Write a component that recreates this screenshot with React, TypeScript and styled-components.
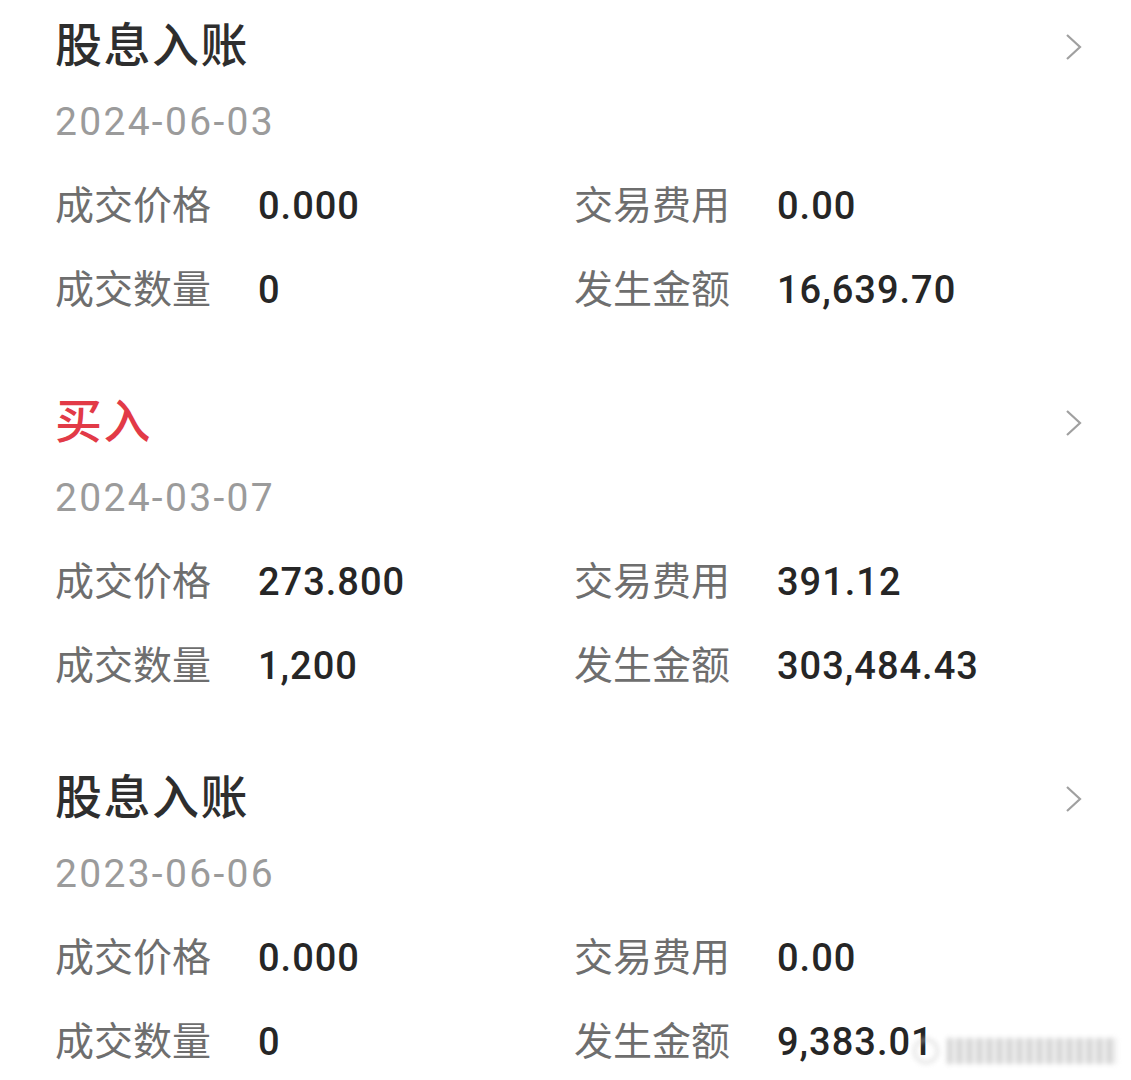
import React from "react";
import styled, { createGlobalStyle } from "styled-components";

const GlobalStyle = createGlobalStyle`
  html, body {
    margin: 0;
    padding: 0;
    background: #ffffff;
    overflow: hidden;
  }
  body {
    font-family: "Noto Sans CJK SC", "Noto Sans", sans-serif;
  }
`;

const Page = styled.div`
  position: relative;
  width: 1131px;
  height: 1080px;
  box-sizing: border-box;
  padding: 2px 48px 0 55px;
  display: flex;
  flex-direction: column;
  gap: 48px;
  overflow: hidden;
`;

const Record = styled.section`
  display: flex;
  flex-direction: column;
`;

const Header = styled.div`
  display: flex;
  align-items: center;
  justify-content: space-between;
  height: 80px;
`;

const Title = styled.h2<{ $buy?: boolean }>`
  margin: 0;
  font-family: "Noto Sans CJK SC", sans-serif;
  font-size: 47px;
  font-weight: 500;
  letter-spacing: 1.5px;
  line-height: 80px;
  color: ${(p) => (p.$buy ? "#e23a47" : "#2e2e2e")};
`;

const Chevron = styled.svg`
  margin-top: 10px;
  flex-shrink: 0;
`;

const DateLine = styled.div`
  height: 80px;
  line-height: 80px;
  font-family: Roboto, "Noto Sans", sans-serif;
  font-size: 39px;
  letter-spacing: 2.3px;
  color: #9b9b9b;
`;

const Grid = styled.div`
  display: grid;
  grid-template-columns: 519px 1fr;
  grid-auto-rows: 84px;
`;

const Cell = styled.div`
  display: flex;
  align-items: center;
`;

const Label = styled.span`
  width: 203px;
  flex-shrink: 0;
  padding-bottom: 5px;
  font-family: "Noto Sans CJK SC", sans-serif;
  font-size: 39px;
  color: #6e6e6e;
`;

const Value = styled.span`
  padding-top: 3px;
  font-family: Roboto, "Noto Sans", sans-serif;
  font-size: 38px;
  font-weight: 500;
  letter-spacing: 1px;
  color: #262626;
`;

const Watermark = styled.div`
  position: absolute;
  right: 14px;
  bottom: 16px;
  display: flex;
  align-items: center;
  gap: 8px;
  opacity: 0.6;
  filter: blur(2.5px);
`;

const MarkDot = styled.div`
  width: 26px;
  height: 26px;
  border-radius: 50%;
  border: 3px solid #cfcfcf;
  box-sizing: border-box;
`;

const MarkBar = styled.div<{ $w: number }>`
  width: ${(p) => p.$w}px;
  height: 26px;
  background: repeating-linear-gradient(
    90deg,
    #b4b4b4 0 5px,
    #e6e6e6 5px 10px
  );
`;

type Item = {
  title: string;
  buy?: boolean;
  date: string;
  price: string;
  fee: string;
  qty: string;
  amount: string;
};

const records: Item[] = [
  { title: "股息入账", date: "2024-06-03", price: "0.000", fee: "0.00", qty: "0", amount: "16,639.70" },
  { title: "买入", buy: true, date: "2024-03-07", price: "273.800", fee: "391.12", qty: "1,200", amount: "303,484.43" },
  { title: "股息入账", date: "2023-06-06", price: "0.000", fee: "0.00", qty: "0", amount: "9,383.01" },
];

function Arrow() {
  return (
    <Chevron width="18" height="28" viewBox="0 0 18 28">
      <polyline points="2,2 15,14 2,26" fill="none" stroke="#a0a0a0" strokeWidth="2.2" strokeLinejoin="miter" />
    </Chevron>
  );
}

export default function App() {
  return (
    <>
      <GlobalStyle />
      <Page>
        {records.map((r, i) => (
          <Record key={i}>
            <Header>
              <Title $buy={r.buy}>{r.title}</Title>
              <Arrow />
            </Header>
            <DateLine>{r.date}</DateLine>
            <Grid>
              <Cell>
                <Label>成交价格</Label>
                <Value>{r.price}</Value>
              </Cell>
              <Cell>
                <Label>交易费用</Label>
                <Value>{r.fee}</Value>
              </Cell>
              <Cell>
                <Label>成交数量</Label>
                <Value>{r.qty}</Value>
              </Cell>
              <Cell>
                <Label>发生金额</Label>
                <Value>{r.amount}</Value>
              </Cell>
            </Grid>
          </Record>
        ))}
        <Watermark>
          <MarkDot />
          <MarkBar $w={170} />
        </Watermark>
      </Page>
    </>
  );
}
